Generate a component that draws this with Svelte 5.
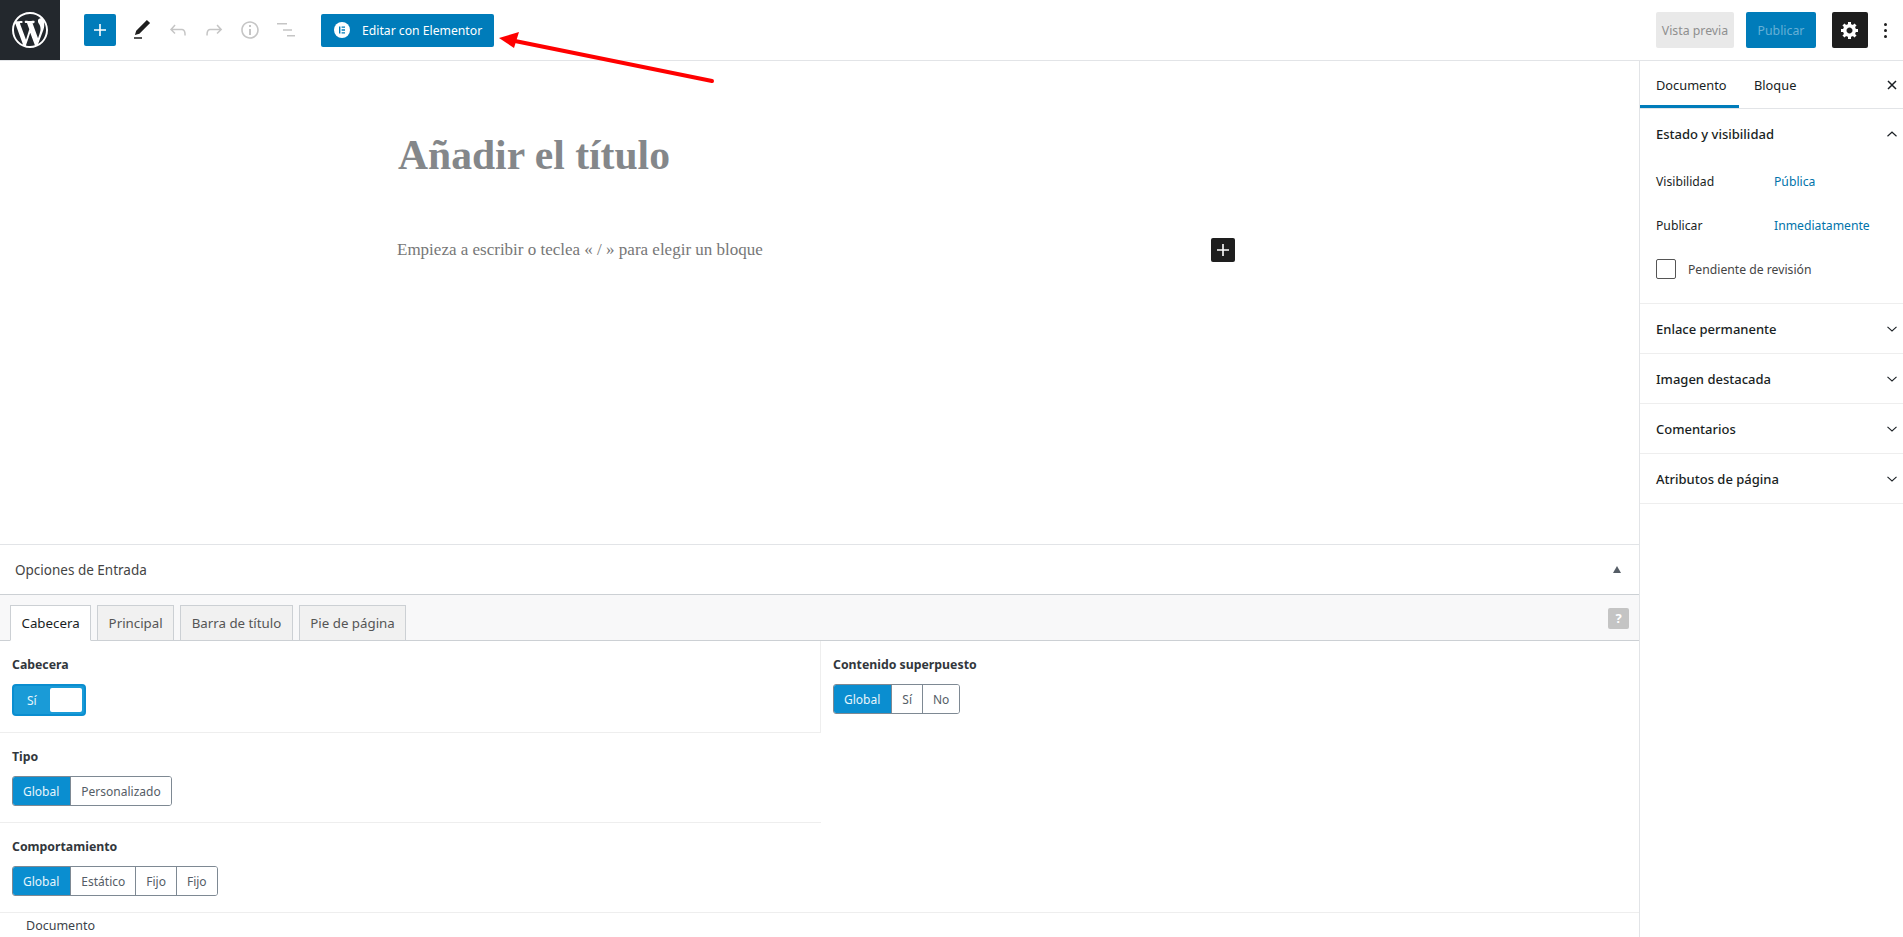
<script>
  const closedPanels = ['Enlace permanente', 'Imagen destacada', 'Comentarios', 'Atributos de página'];
  const metaTabs = ['Principal', 'Barra de título', 'Pie de página'];
  const behaviours = ['Estático', 'Fijo', 'Fijo'];
</script>

<div class="page">
  <header class="topbar">
    <a class="logo" href="#top" aria-label="WordPress">
      <svg viewBox="0 0 20 20" width="36" height="36"><path fill="#fff" d="M20 10c0-5.51-4.49-10-10-10C4.48 0 0 4.49 0 10c0 5.52 4.48 10 10 10 5.51 0 10-4.48 10-10zM7.78 15.37L4.37 6.22c.55-.02 1.17-.08 1.17-.08.5-.06.44-1.13-.06-1.11 0 0-1.45.11-2.37.11-.18 0-.37 0-.58-.01C4.12 2.69 6.87 1.11 10 1.11c2.33 0 4.45.87 6.05 2.34-.68-.11-1.65.39-1.65 1.58 0 .74.45 1.36.9 2.1.35.61.55 1.36.55 2.46 0 1.49-1.4 5-1.4 5l-3.03-8.37c.54-.02.82-.17.82-.17.5-.05.44-1.25-.06-1.22 0 0-1.44.12-2.38.12-.87 0-2.33-.12-2.33-.12-.5-.03-.56 1.2-.06 1.22l.92.08 1.26 3.41zM17.41 10c.24-.64.74-1.87.43-4.25.7 1.29 1.05 2.71 1.05 4.25 0 3.29-1.73 6.24-4.4 7.78.97-2.59 1.94-5.2 2.92-7.78zM6.1 18.09C3.12 16.65 1.11 13.53 1.11 10c0-1.3.23-2.48.72-3.59C3.25 10.3 4.67 14.2 6.1 18.09zm4.03-6.63l2.58 6.98c-.86.29-1.76.45-2.71.45-.79 0-1.57-.11-2.29-.33.81-2.38 1.62-4.74 2.42-7.1z"/></svg>
    </a>
    <div class="tools">
      <button class="add" aria-label="Añadir bloque">
        <svg viewBox="0 0 24 24" width="24" height="24"><path fill="#fff" d="M18 11.2h-5.2V6h-1.6v5.2H6v1.6h5.2V18h1.6v-5.2H18z"/></svg>
      </button>
      <span class="tool">
        <svg viewBox="0 0 24 24" width="24" height="24"><path fill="#1e1e1e" d="M20.1 5.1L16.9 2 6.2 12.7l-1.3 4.4 4.5-1.3L20.1 5.1zM4 20.8h8v-1.5H4v1.5z"/></svg>
      </span>
      <span class="tool off">
        <svg viewBox="0 0 24 24" width="24" height="24"><path d="M18.3 11.7c-.6-.6-1.4-.9-2.3-.9H6.7l2.9-3.3-1.1-1-4.5 5L8.5 16l1-1-2.7-2.7H16c.5 0 .9.2 1.3.5 1 1 1 3.4 1 4.5v.3h1.5v-.2c0-1.5 0-4.3-1.5-5.7z"/></svg>
      </span>
      <span class="tool off">
        <svg viewBox="0 0 24 24" width="24" height="24"><path d="M15.6 6.5l-1.1 1 2.9 3.3H8c-.9 0-1.7.3-2.3.9-1.4 1.5-1.4 4.2-1.4 5.6v.2h1.5v-.3c0-1.1 0-3.5 1-4.5.3-.3.7-.5 1.3-.5h9.2L14.5 15l1.1 1.1 4.6-4.6-4.6-5z"/></svg>
      </span>
      <span class="tool off">
        <svg viewBox="0 0 24 24" width="24" height="24"><path d="M12 3.2c-4.8 0-8.8 3.9-8.8 8.8 0 4.8 3.9 8.8 8.8 8.8 4.8 0 8.8-3.9 8.8-8.8 0-4.8-4-8.8-8.8-8.8zm0 16c-4 0-7.2-3.3-7.2-7.2C4.8 8 8 4.8 12 4.8s7.2 3.3 7.2 7.2c0 4-3.2 7.2-7.2 7.2zM11 17h2v-6h-2v6zm0-8h2V7h-2v2z"/></svg>
      </span>
      <span class="tool off">
        <svg viewBox="0 0 24 24" width="24" height="24"><path d="M3 5h10v1.4H3zM9 11.3h9v1.4H9zM13 17h8v1.4h-8z"/></svg>
      </span>
      <button class="elementor">
        <svg viewBox="0 0 16 16" width="16" height="16"><circle cx="8" cy="8" r="8" fill="#fff"/><path fill="#007cba" d="M5 4.5h1.4v7H5zM7.6 4.5h3.4v1.3H7.6zM7.6 7.3h3.4v1.4H7.6zM7.6 10.2h3.4v1.3H7.6z"/></svg>
        Editar con Elementor
      </button>
    </div>
    <div class="actions">
      <button class="preview">Vista previa</button>
      <button class="publish">Publicar</button>
      <button class="settings" aria-label="Ajustes">
        <svg viewBox="0 0 20 20" width="20" height="20"><path fill="#fff" d="M18 12h-2.18c-.17.7-.44 1.35-.81 1.93l1.54 1.54-2.1 2.1-1.54-1.54c-.58.36-1.23.63-1.91.79V19H8v-2.18c-.68-.16-1.33-.43-1.91-.79l-1.54 1.54-2.12-2.12 1.54-1.54c-.36-.58-.63-1.23-.79-1.91H1V9.03h2.17c.16-.7.44-1.35.8-1.94L2.43 5.55l2.1-2.1 1.54 1.54c.58-.37 1.24-.64 1.93-.81V2h3v2.18c.68.16 1.33.43 1.91.79l1.54-1.54 2.12 2.12-1.54 1.54c.36.59.64 1.24.8 1.94H18V12zm-8.5 1.5c1.66 0 3-1.34 3-3s-1.34-3-3-3-3 1.34-3 3 1.34 3 3 3z"/></svg>
      </button>
      <span class="dots"><i></i><i></i><i></i></span>
    </div>
  </header>

  <div class="workspace">
    <main class="main">
      <section class="editor">
        <h1 class="title">Añadir el título</h1>
        <div class="para">
          <p>Empieza a escribir o teclea « / » para elegir un bloque</p>
          <button class="inline-add" aria-label="Añadir bloque">
            <svg viewBox="0 0 24 24" width="24" height="24"><path fill="#fff" d="M18 11.2h-5.2V6h-1.6v5.2H6v1.6h5.2V18h1.6v-5.2H18z"/></svg>
          </button>
        </div>
      </section>

      <section class="metabox">
        <div class="meta-head">
          <h2>Opciones de Entrada</h2>
          <span class="caret"></span>
        </div>
        <div class="meta-tabs">
          <span class="mtab active">Cabecera</span>
          {#each metaTabs as tab}
            <span class="mtab">{tab}</span>
          {/each}
          <span class="help">?</span>
        </div>
        <div class="fields">
          <div class="col-left">
            <div class="field first">
              <div class="label">Cabecera</div>
              <div class="toggle"><span>Sí</span><i></i></div>
            </div>
            <div class="field">
              <div class="label">Tipo</div>
              <div class="group">
                <span class="on">Global</span>
                <span>Personalizado</span>
              </div>
            </div>
            <div class="field last">
              <div class="label">Comportamiento</div>
              <div class="group">
                <span class="on">Global</span>
                {#each behaviours as b}
                  <span>{b}</span>
                {/each}
              </div>
            </div>
          </div>
          <div class="col-right">
            <div class="label">Contenido superpuesto</div>
            <div class="group">
              <span class="on">Global</span>
              <span>Sí</span>
              <span>No</span>
            </div>
          </div>
        </div>
      </section>

      <footer class="crumbs">Documento</footer>
    </main>

    <aside class="sidebar">
      <div class="side-tabs">
        <span class="stab active">Documento</span>
        <span class="stab">Bloque</span>
        <svg class="close" viewBox="0 0 10 10" width="10" height="10"><path stroke="#191e23" stroke-width="1.5" fill="none" d="M1 1l8 8M9 1l-8 8"/></svg>
      </div>

      <div class="panel open">
        <div class="panel-head">
          <span>Estado y visibilidad</span>
          <svg viewBox="0 0 24 24" width="18" height="18"><path fill="#191e23" d="M6.5 15.5l5.5-5 5.5 5 1-1.1L12 8.4l-6.5 6z"/></svg>
        </div>
        <div class="row"><span>Visibilidad</span><a href="#top">Pública</a></div>
        <div class="row"><span>Publicar</span><a href="#top">Inmediatamente</a></div>
        <label class="check"><i></i>Pendiente de revisión</label>
      </div>

      {#each closedPanels as name}
        <div class="panel">
          <div class="panel-head">
            <span>{name}</span>
            <svg viewBox="0 0 24 24" width="18" height="18"><path fill="#191e23" d="M17.5 9.5L12 14.5l-5.5-5-1 1.1 6.5 6 6.5-6z" transform="translate(0 -1)"/></svg>
          </div>
        </div>
      {/each}
    </aside>
  </div>

  <svg class="arrow" viewBox="0 0 240 70" width="240" height="70">
    <path d="M16 11L213 51" stroke="#f00" stroke-width="4" stroke-linecap="round" fill="none"/>
    <path d="M0 8L20 2L15 18z" fill="#f00"/>
  </svg>
</div>

<style>
  :global(body) {
    margin: 0;
    background: #fff;
    font-family: "Noto Sans", sans-serif;
    font-size: 13px;
    color: #191e23;
  }

  .page {
    position: relative;
    height: 937px;
    overflow: hidden;
  }

  button {
    border: 0;
    padding: 0;
    font: inherit;
    cursor: pointer;
  }

  .topbar {
    display: flex;
    align-items: center;
    height: 60px;
    border-bottom: 1px solid #e2e4e7;
  }

  .logo {
    display: flex;
    align-items: center;
    justify-content: center;
    width: 60px;
    height: 60px;
    background: #23282d;
  }

  .tools {
    display: flex;
    align-items: center;
    margin-left: 24px;
  }

  .add {
    display: flex;
    align-items: center;
    justify-content: center;
    width: 32px;
    height: 32px;
    margin-right: 8px;
    background: #007cba;
    border-radius: 2px;
  }

  .tool {
    display: flex;
    justify-content: center;
    width: 36px;
  }

  .tool.off svg {
    fill: #c5c5c5;
  }

  .elementor {
    display: flex;
    align-items: center;
    gap: 12px;
    height: 33px;
    width: 173px;
    margin-left: 17px;
    padding-left: 13px;
    box-sizing: border-box;
    background: #007cba;
    color: #fff;
    border-radius: 2px;
    font-size: 12.2px;
  }

  .actions {
    display: flex;
    align-items: center;
    margin-left: auto;
  }

  .preview,
  .publish {
    height: 36px;
    border-radius: 2px;
    font-size: 12.3px;
  }

  .preview {
    width: 78px;
    background: #e9e9e9;
    color: #8f8f8f;
  }

  .publish {
    width: 70px;
    margin-left: 12px;
    background: #007cba;
    color: #66b0d6;
  }

  .settings {
    display: flex;
    align-items: center;
    justify-content: center;
    width: 36px;
    height: 36px;
    margin-left: 16px;
    background: #1e1e1e;
    border-radius: 2px;
  }

  .dots {
    display: flex;
    flex-direction: column;
    align-items: center;
    gap: 3px;
    width: 35px;
  }

  .dots i {
    width: 3px;
    height: 3px;
    background: #1e1e1e;
    border-radius: 50%;
  }

  .workspace {
    display: flex;
    height: 876px;
  }

  .main {
    display: flex;
    flex-direction: column;
    flex: 1;
    min-width: 0;
  }

  .editor {
    flex: 1;
    padding-left: 397px;
  }

  .title {
    margin: 69px 0 0 1px;
    font: bold 41.6px/50px "Liberation Serif", serif;
    color: #84878a;
  }

  .para {
    display: flex;
    justify-content: space-between;
    align-items: center;
    width: 838px;
    margin-top: 58px;
  }

  .para p {
    margin: 0;
    font: 17px/24px "Liberation Serif", serif;
    color: #777;
  }

  .inline-add {
    display: flex;
    width: 24px;
    height: 24px;
    background: #1e1e1e;
    border-radius: 2px;
  }

  .metabox {
    border-top: 1px solid #e2e4e7;
  }

  .meta-head {
    display: flex;
    align-items: center;
    justify-content: space-between;
    height: 49px;
    padding: 0 15px;
    border-bottom: 1px solid #ccd0d4;
  }

  .meta-head h2 {
    margin: 0;
    font-size: 13.5px;
    font-weight: 400;
    color: #444;
  }

  .caret {
    border-left: 4px solid transparent;
    border-right: 4px solid transparent;
    border-bottom: 7px solid #555d66;
    margin-right: 3px;
  }

  .meta-tabs {
    display: flex;
    align-items: flex-end;
    gap: 6px;
    position: relative;
    height: 45px;
    padding-left: 10px;
    background: #f8f8f9;
    border-bottom: 1px solid #ccd0d4;
  }

  .mtab {
    display: flex;
    align-items: center;
    height: 34px;
    padding: 0 10.5px;
    margin-bottom: -1px;
    background: #f1f1f1;
    border: 1px solid #ccd0d4;
    color: #555;
    font-size: 13.3px;
  }

  .mtab.active {
    background: #fff;
    border-bottom-color: #fff;
    color: #191e23;
  }

  .help {
    position: absolute;
    top: 13px;
    right: 10px;
    width: 21px;
    height: 21px;
    border-radius: 2px;
    background: #c4c4c4;
    color: #fff;
    font-weight: 700;
    font-size: 13px;
    line-height: 21px;
    text-align: center;
  }

  .fields {
    display: flex;
    border-bottom: 1px solid #eee;
  }

  .col-left {
    width: 821px;
  }

  .field {
    height: 74px;
    padding: 15px 12px 0;
    border-bottom: 1px solid #eee;
  }

  .field.first {
    border-right: 1px solid #eee;
    height: 76px;
  }

  .field.last {
    border-bottom: 0;
  }

  .col-right {
    padding: 15px 12px 0;
  }

  .label {
    height: 18px;
    margin-bottom: 10px;
    font-size: 12.3px;
    font-weight: 700;
    line-height: 18px;
    color: #32373c;
  }

  .toggle {
    display: flex;
    align-items: center;
    justify-content: space-between;
    box-sizing: border-box;
    width: 74px;
    height: 32px;
    padding: 0 4px 0 13px;
    background: #1a9bd7;
    border: 2px solid #0a8ed0;
    border-radius: 4px;
    color: #e8f5fb;
    font-size: 12px;
  }

  .toggle i {
    width: 32px;
    height: 24px;
    background: #fff;
    border-radius: 2px;
    margin-right: -2px;
  }

  .group {
    display: inline-flex;
    height: 30px;
    border: 1px solid #7e8993;
    border-radius: 3px;
    box-sizing: border-box;
    overflow: hidden;
    color: #555d66;
    font-size: 12px;
  }

  .group span {
    display: flex;
    align-items: center;
    padding: 0 10px;
    background: #fff;
    border-left: 1px solid #7e8993;
  }

  .group span.on {
    margin: -1px 0 -1px -1px;
    padding: 0 11px;
    background: #0a8ed0;
    border-left: 0;
    color: #e8f5fb;
  }

  .crumbs {
    height: 24px;
    padding-left: 26px;
    font-size: 12.5px;
    line-height: 25px;
    color: #3c434a;
  }

  .sidebar {
    width: 263px;
    border-left: 1px solid #e2e4e7;
  }

  .side-tabs {
    display: flex;
    align-items: center;
    height: 47px;
    border-bottom: 1px solid #e2e4e7;
  }

  .stab {
    display: flex;
    align-items: center;
    height: 47px;
    padding: 0 15px;
    box-sizing: border-box;
    font-size: 12.8px;
  }

  .stab.active {
    width: 99px;
    padding-left: 16px;
    border-top: 3px solid transparent;
    border-bottom: 3px solid #007cba;
  }

  .close {
    margin-left: auto;
    margin-right: 6px;
  }

  .panel {
    border-bottom: 1px solid #eee;
    padding: 0 16px;
  }

  .panel.open {
    height: 195px;
    box-sizing: border-box;
  }

  .panel-head {
    display: flex;
    align-items: center;
    justify-content: space-between;
    height: 49px;
    font-weight: 500;
    margin-right: -14px;
  }

  .panel.open .panel-head {
    height: 50px;
  }

  .row {
    display: grid;
    grid-template-columns: 118px 1fr;
    height: 44px;
    align-items: center;
    font-size: 12.2px;
  }

  .row:first-of-type {
    margin-top: 2px;
  }

  .row a {
    color: #0073aa;
    text-decoration: none;
  }

  .check {
    display: flex;
    align-items: center;
    gap: 12px;
    margin-top: 12px;
    font-size: 12.2px;
    color: #444;
  }

  .check i {
    width: 20px;
    height: 20px;
    box-sizing: border-box;
    border: 1px solid #555;
    border-radius: 2px;
  }

  .arrow {
    position: absolute;
    left: 499px;
    top: 30px;
    pointer-events: none;
  }
</style>
